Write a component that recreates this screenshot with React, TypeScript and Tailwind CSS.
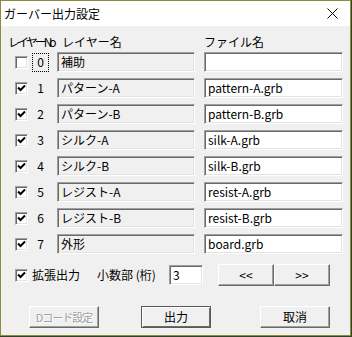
import type { ReactNode } from 'react'

type Layer = { no: number; name: string; file: string; on: boolean }

const layers: Layer[] = [
  { no: 0, name: '補助', file: '', on: false },
  { no: 1, name: 'パターン-A', file: 'pattern-A.grb', on: true },
  { no: 2, name: 'パターン-B', file: 'pattern-B.grb', on: true },
  { no: 3, name: 'シルク-A', file: 'silk-A.grb', on: true },
  { no: 4, name: 'シルク-B', file: 'silk-B.grb', on: true },
  { no: 5, name: 'レジスト-A', file: 'resist-A.grb', on: true },
  { no: 6, name: 'レジスト-B', file: 'resist-B.grb', on: true },
  { no: 7, name: '外形', file: 'board.grb', on: true },
]

const sunken =
  'border border-t-[#a0a0a0] border-l-[#a0a0a0] border-b-white border-r-white shadow-[inset_1px_1px_0_#696969,inset_-1px_-1px_0_#e3e3e3]'

function CheckBox({ on }: { on: boolean }) {
  return (
    <div className={`w-[13px] h-[13px] shrink-0 bg-white ${sunken}`}>
      {on && (
        <svg width="11" height="11" viewBox="0 0 11 11" className="block">
          <path d="M2 4.5 L4.5 7 L9 2.5" fill="none" stroke="#000" strokeWidth="2" />
        </svg>
      )}
    </div>
  )
}

function Field({ value, white, w }: { value: string; white?: boolean; w: string }) {
  return (
    <div
      className={`${w} h-[20px] shrink-0 ${white ? 'bg-white' : 'bg-[#f0f0f0]'} ${sunken} flex items-center pl-[3px] text-[12px] leading-none whitespace-nowrap overflow-hidden`}
    >
      {value}
    </div>
  )
}

function Button({ children, w, kind }: { children: ReactNode; w: string; kind?: 'default' | 'disabled' }) {
  const frame =
    kind === 'default'
      ? 'border border-[#5a5a5a] shadow-[inset_1px_1px_0_#fff,inset_-1px_-1px_0_#696969]'
      : 'border border-t-white border-l-white border-r-[#696969] border-b-[#696969] shadow-[inset_-1px_-1px_0_#a0a0a0]'
  const text = kind === 'disabled' ? 'text-[#a0a0a0] [text-shadow:1px_1px_0_#fff]' : 'text-black'
  return (
    <div
      className={`${w} h-[22px] shrink-0 bg-[#f0f0f0] ${frame} ${text} flex items-center justify-center text-[12px] leading-none whitespace-nowrap`}
    >
      {children}
    </div>
  )
}

export default function App() {
  return (
    <div className="w-[352px] h-[337px] bg-[#33402a] font-['Noto_Sans_CJK_JP',sans-serif] text-black">
      <div className="w-[351px] h-[336px] border border-[#8f8a3e] bg-[#f0f0f0] flex flex-col">
        {/* title bar */}
        <div className="h-[25px] bg-white flex items-center justify-between pl-[3px] pr-[12px]">
          <span className="text-[12px] leading-none">ガーバー出力設定</span>
          <svg width="11" height="11" viewBox="0 0 11 11">
            <path d="M0.5 0.5 L10.5 10.5 M10.5 0.5 L0.5 10.5" stroke="#000" strokeWidth="1" />
          </svg>
        </div>

        {/* headers */}
        <div className="mt-[9px] h-[14px] flex items-center pl-[7px] text-[12px] leading-none whitespace-nowrap">
          <span className="w-[54px] tracking-[-3px]">レイヤーNo</span>
          <span className="w-[142px]">レイヤー名</span>
          <span>ファイル名</span>
        </div>

        {/* layer rows */}
        <div className="mt-[3px] flex flex-col gap-[6px]">
          {layers.map((l) => (
            <div key={l.no} className="h-[20px] flex items-center pl-[14px]">
              <CheckBox on={l.on} />
              <div
                className={`ml-[4px] w-[17px] h-[19px] flex items-center justify-center text-[12px] leading-none ${
                  l.no === 0 ? 'border border-dotted border-black' : ''
                }`}
              >
                {l.no}
              </div>
              <div className="ml-[8px]">
                <Field value={l.name} w="w-[138px]" />
              </div>
              <div className="ml-[9px]">
                <Field value={l.file} white w="w-[139px]" />
              </div>
            </div>
          ))}
        </div>

        {/* options */}
        <div className="mt-[10px] h-[22px] flex items-center pl-[14px] text-[12px] leading-none whitespace-nowrap">
          <CheckBox on />
          <span className="ml-[4px] w-[65px]">拡張出力</span>
          <span className="w-[72px]">小数部 (桁)</span>
          <Field value="3" white w="w-[34px]" />
          <div className="ml-[15px] flex">
            <Button w="w-[56px]">&lt;&lt;</Button>
            <Button w="w-[56px]">&gt;&gt;</Button>
          </div>
        </div>

        {/* buttons */}
        <div className="mt-[20px] flex pl-[28px]">
          <Button w="w-[70px]" kind="disabled">
            <span className="tracking-[-1px] text-[11px]">Dコード設定</span>
          </Button>
          <div className="ml-[42px]">
            <Button w="w-[70px]" kind="default">出力</Button>
          </div>
          <div className="ml-[49px]">
            <Button w="w-[70px]">取消</Button>
          </div>
        </div>
      </div>
    </div>
  )
}
